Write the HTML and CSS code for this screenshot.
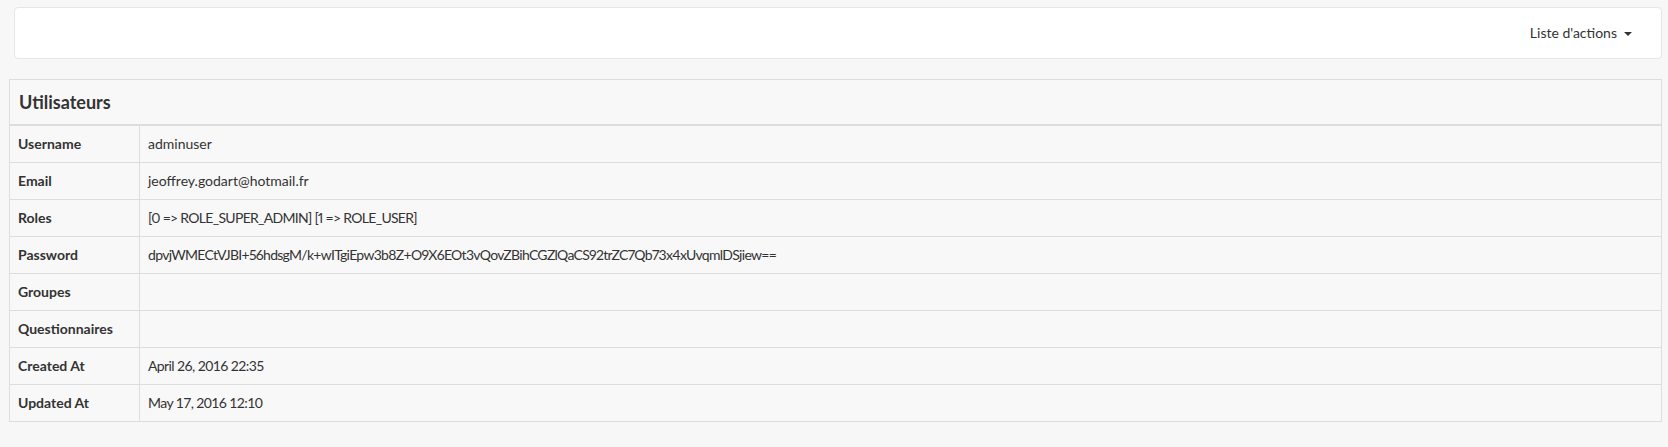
FILE: index.html
```html
<!DOCTYPE html>
<html lang="fr">
<head>
<meta charset="utf-8">
<title>Utilisateurs</title>
<link rel="stylesheet" href="styles.css">
</head>
<body>
<div class="page">
  <div class="topbar">
    <div class="dropdown">Liste d'actions <span class="caret"></span></div>
  </div>
  <div class="panel">
    <div class="panel-heading">Utilisateurs</div>
    <table class="details">
      <tbody>
        <tr><th>Username</th><td>adminuser</td></tr>
        <tr><th>Email</th><td>jeoffrey.godart@hotmail.fr</td></tr>
        <tr><th>Roles</th><td class="caps">[0 =&gt; ROLE_SUPER_ADMIN] [1 =&gt; ROLE_USER]</td></tr>
        <tr><th>Password</th><td class="caps">dpvjWMECtVJBI+56hdsgM/k+wITgiEpw3b8Z+O9X6EOt3vQovZBihCGZlQaCS92trZC7Qb73x4xUvqmlDSjiew==</td></tr>
        <tr><th>Groupes</th><td></td></tr>
        <tr><th>Questionnaires</th><td></td></tr>
        <tr><th>Created At</th><td class="date">April 26, 2016 22:35</td></tr>
        <tr><th>Updated At</th><td class="date">May 17, 2016 12:10</td></tr>
      </tbody>
    </table>
  </div>
</div>
</body>
</html>
```
FILE: styles.css
```css
html, body {
  margin: 0;
  background: #f7f7f7;
}
body {
  font-family: Lato, "Open Sans", sans-serif;
  font-size: 14px;
  color: #333;
}
.page {
  padding: 7px 6px 0 9px;
}
.topbar {
  margin-left: 5px;
  height: 50px;
  background: #fff;
  border: 1px solid #e6e6e6;
  border-radius: 4px;
  display: flex;
  align-items: center;
  justify-content: flex-end;
  padding-right: 29px;
}
.dropdown {
  display: flex;
  align-items: center;
  gap: 7px;
  color: #333;
  line-height: 20px;
}
.caret {
  width: 0;
  height: 0;
  border-top: 4px solid #333;
  border-left: 4px solid transparent;
  border-right: 4px solid transparent;
  margin-top: 1px;
}
.panel {
  margin-top: 20px;
  border: 1px solid #dddddd;
  background: #f8f8f8;
}
.panel-heading {
  height: 44px;
  padding: 0 9px;
  display: flex;
  align-items: center;
  font-size: 18px;
  font-weight: 700;
  border-bottom: 2px solid #dddddd;
}
.details {
  width: 100%;
  border-collapse: collapse;
}
.details tr + tr th,
.details tr + tr td {
  border-top: 1px solid #dddddd;
}
.details th,
.details td {
  padding: 8px;
  line-height: 20px;
  text-align: left;
  vertical-align: middle;
  font-variant-numeric: proportional-nums;
}
.details th {
  width: 113px;
  font-weight: 700;
  border-right: 1px solid #dddddd;
}
.details td.caps {
  letter-spacing: -0.7px;
}
.details td.date {
  font-variant-numeric: tabular-nums;
  letter-spacing: -0.6px;
}
```
